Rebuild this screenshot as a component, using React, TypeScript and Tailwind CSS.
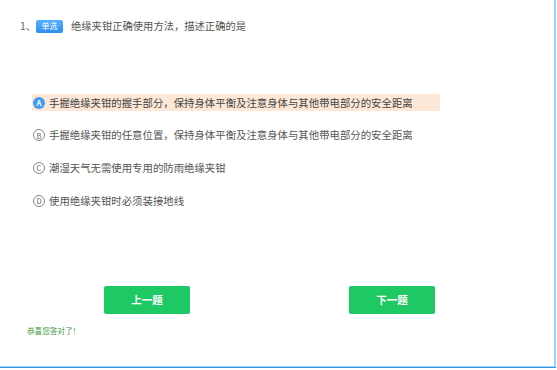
const options = [
  { key: "A", text: "手握绝缘夹钳的握手部分，保持身体平衡及注意身体与其他带电部分的安全距离", active: true },
  { key: "B", text: "手握绝缘夹钳的任意位置，保持身体平衡及注意身体与其他带电部分的安全距离", active: false },
  { key: "C", text: "潮湿天气无需使用专用的防雨绝缘夹钳", active: false },
  { key: "D", text: "使用绝缘夹钳时必须装接地线", active: false },
];

export default function App() {
  return (
    <div
      className="h-[370px] w-[557px] bg-white"
      style={{ fontFamily: '"Noto Sans CJK SC", "Noto Sans", sans-serif' }}
    >
      <div className="h-[368px] w-[556px] border-b border-[#3b95e0]">
        <div className="flex h-[367px] w-[556px] flex-col border-b border-r-2 border-[#9ad4fa]">
          {/* question */}
          <div className="ml-[20px] mt-[18px] flex h-[16px] items-center text-[10.3px] text-[#555]">
            <span className="text-[#666]">1、</span>
            <span className="flex h-[13px] w-[27px] items-center justify-center rounded-[2px] bg-gradient-to-b from-[#56b0ff] to-[#2f8cf0] text-[8px] text-white">
              单选
            </span>
            <span className="ml-[8px]">绝缘夹钳正确使用方法，描述正确的是</span>
          </div>

          {/* options */}
          <div className="ml-[32px] mt-[60px] flex w-[408px] flex-col gap-[15.7px]">
            {options.map((o) => (
              <div
                key={o.key}
                className={`flex h-[17px] items-center pl-[1px] text-[10.4px] ${
                  o.active ? "bg-[#fde8d7] text-[#444]" : "text-[#555]"
                }`}
              >
                {o.active ? (
                  <span className="flex h-[12px] w-[12px] items-center justify-center rounded-full bg-[#3e9cf4] text-[7.5px] font-bold text-white">
                    {o.key}
                  </span>
                ) : (
                  <span className="flex h-[12px] w-[12px] items-center justify-center rounded-full border border-[#888] text-[7.5px] text-[#666]">
                    {o.key}
                  </span>
                )}
                <span className="ml-[4px]">{o.text}</span>
              </div>
            ))}
          </div>

          {/* buttons */}
          <div className="ml-[104px] mt-[77px] flex gap-[159px]">
            <button className="flex h-[28px] w-[86px] items-center justify-center rounded-[2px] bg-[#1ec862] text-[10.5px] font-bold text-white">
              上一题
            </button>
            <button className="flex h-[28px] w-[86px] items-center justify-center rounded-[2px] bg-[#1ec862] text-[10.5px] font-bold text-white">
              下一题
            </button>
          </div>

          <div className="ml-[27px] mt-[11px] text-[7.6px] text-[#3f9a3f]">恭喜您答对了！</div>
        </div>
      </div>
    </div>
  );
}
